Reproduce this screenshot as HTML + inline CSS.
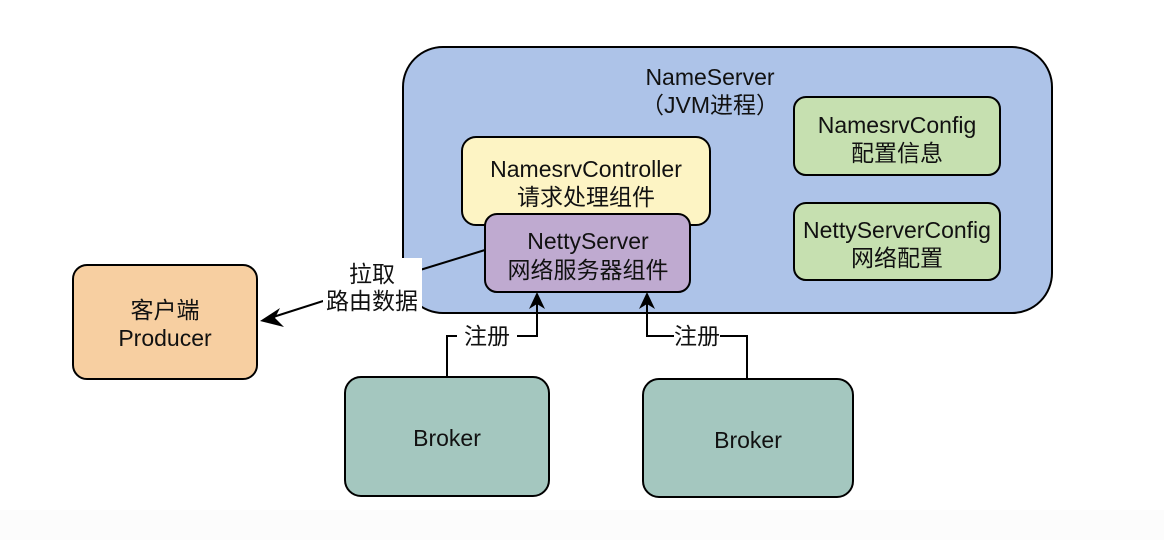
<!DOCTYPE html>
<html><head><meta charset="utf-8"><style>
body{margin:0;background:#fff;}
svg{display:block;font-family:"Liberation Sans","Noto Sans CJK SC",sans-serif;}
text{font-size:23px;fill:#111;text-anchor:middle;}
</style></head><body>
<svg width="1164" height="540" viewBox="0 0 1164 540">
<rect x="0" y="510" width="1164" height="30" fill="#fcfcfc"/>
<rect x="403" y="47" width="649" height="266" rx="40" fill="#adc3e8" stroke="#000" stroke-width="2"/>
<text x="710" y="85">NameServer</text>
<text x="710" y="113">（JVM进程）</text>
<rect x="462" y="137" width="248" height="88" rx="14" fill="#fdf4c4" stroke="#000" stroke-width="2"/>
<text x="586" y="177">NamesrvController</text>
<text x="586" y="205">请求处理组件</text>
<rect x="485" y="214" width="205" height="78" rx="12" fill="#bfaad0" stroke="#000" stroke-width="2"/>
<text x="588" y="249">NettyServer</text>
<text x="588" y="278">网络服务器组件</text>
<rect x="794" y="97" width="206" height="78" rx="12" fill="#c6e0b0" stroke="#000" stroke-width="2"/>
<text x="897" y="133">NamesrvConfig</text>
<text x="897" y="161">配置信息</text>
<rect x="794" y="203" width="206" height="77" rx="12" fill="#c6e0b0" stroke="#000" stroke-width="2"/>
<text x="897" y="238">NettyServerConfig</text>
<text x="897" y="266">网络配置</text>
<rect x="73" y="265" width="184" height="114" rx="14" fill="#f7cfa1" stroke="#000" stroke-width="2"/>
<text x="165" y="318">客户端</text>
<text x="165" y="346">Producer</text>
<rect x="345" y="377" width="204" height="119" rx="16" fill="#a4c7bf" stroke="#000" stroke-width="2"/>
<text x="447" y="446">Broker</text>
<rect x="643" y="379" width="210" height="118" rx="16" fill="#a4c7bf" stroke="#000" stroke-width="2"/>
<text x="748" y="448">Broker</text>
<polyline points="485,250 420,270 270,318" fill="none" stroke="#000" stroke-width="2"/>
<polygon points="260,321 280,308 275,318 284,327" fill="#000"/>
<rect x="323" y="258" width="99" height="56" fill="#fff"/>
<text x="372" y="282">拉取</text>
<text x="372" y="309">路由数据</text>
<polyline points="447,377 447,336 537,336 537,302" fill="none" stroke="#000" stroke-width="2"/>
<polygon points="537,292 529,309 537,304 545,309" fill="#000"/>
<rect x="457" y="324" width="60" height="24" fill="#fff"/>
<text x="487" y="344">注册</text>
<polyline points="747,379 747,336 647,336 647,302" fill="none" stroke="#000" stroke-width="2"/>
<polygon points="647,292 639,309 647,304 655,309" fill="#000"/>
<rect x="674" y="324" width="46" height="24" fill="#fff"/>
<text x="697" y="344">注册</text>
</svg>
</body></html>
